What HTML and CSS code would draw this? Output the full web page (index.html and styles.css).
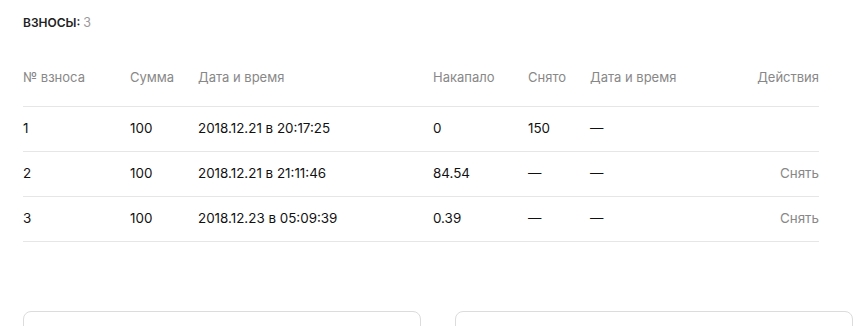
FILE: index.html
```html
<!DOCTYPE html>
<html lang="ru">
<head>
<meta charset="utf-8">
<link rel="stylesheet" href="styles.css">
</head>
<body>
<div class="page">
  <div class="title">ВЗНОСЫ: <span class="count">3</span></div>
  <table class="tbl">
    <thead>
      <tr>
        <th class="c1">№ взноса</th>
        <th class="c2">Сумма</th>
        <th class="c3">Дата и время</th>
        <th class="c4">Накапало</th>
        <th class="c5">Снято</th>
        <th class="c6">Дата и время</th>
        <th class="c7">Действия</th>
      </tr>
    </thead>
    <tbody>
      <tr>
        <td>1</td><td>100</td><td>2018.12.21 в 20:17:25</td><td>0</td><td>150</td><td>—</td><td class="act"></td>
      </tr>
      <tr>
        <td>2</td><td>100</td><td>2018.12.21 в 21:11:46</td><td>84.54</td><td>—</td><td>—</td><td class="act">Снять</td>
      </tr>
      <tr>
        <td>3</td><td>100</td><td>2018.12.23 в 05:09:39</td><td>0.39</td><td>—</td><td>—</td><td class="act">Снять</td>
      </tr>
    </tbody>
  </table>
  <div class="cards">
    <div class="card"></div>
    <div class="card"></div>
  </div>
</div>
</body>
</html>
```
FILE: styles.css
```css
* { box-sizing: border-box; }
html, body { margin: 0; background: #fff; }
body {
  font-family: Inter, "Noto Sans", sans-serif;
  color: #1a1a1a;
  overflow: hidden;
}
.page {
  padding: 16px 6px 0 23px;
}
.title {
  font-size: 12px;
  font-weight: 600;
  color: #222;
  line-height: 14px;
}
.title .count { color: #999; font-weight: 400; font-size: 12.5px; }
.tbl {
  width: 796px;
  border-collapse: collapse;
  margin-top: 34px;
  font-size: 13px;
}
.tbl th {
  font-weight: 400;
  color: #888;
  text-align: left;
  height: 42px;
  vertical-align: bottom;
  padding: 0 0 21px 0;
  line-height: 16px;
  border-bottom: 1px solid #e6e6e6;
}
.tbl td {
  height: 45px;
  padding: 0 0 2px 0;
  border-bottom: 1px solid #e6e6e6;
  vertical-align: middle;
  color: #111;
  font-size: 13.4px;
}
.tbl .c1 { width: 107px; }
.tbl .c2 { width: 68px; }
.tbl .c3 { width: 235px; }
.tbl .c4 { width: 95px; }
.tbl .c5 { width: 62px; }
.tbl .c7, .tbl .act { text-align: right; }
.tbl .act { color: #888; }
.cards {
  display: grid;
  grid-template-columns: 398px 398px;
  gap: 34px;
  margin-top: 69px;
}
.card {
  height: 60px;
  border: 1px solid #dcdcdc;
  border-radius: 8px;
}
```
